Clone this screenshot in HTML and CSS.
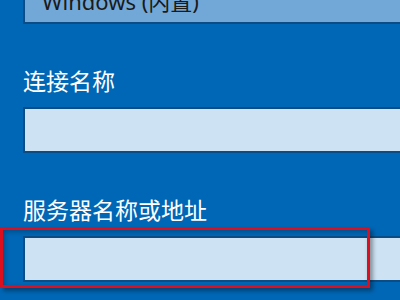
FILE: index.html
```html
<!DOCTYPE html>
<html lang="zh-CN">
<head>
  <meta charset="UTF-8">
  <title>添加 VPN 连接</title>
  <link rel="stylesheet" href="styles.css">
</head>
<body>

<div class="form">
  <div class="field select">Windows (内置)</div>

  <label class="label">连接名称</label>
  <div class="field"></div>

  <label class="label">服务器名称或地址</label>
  <div class="focus-wrap">
    <div class="field"></div>
    <div class="highlight"></div>
  </div>
</div>

</body>
</html>
```

FILE: styles.css
```css
* {
  margin: 0;
  padding: 0;
  box-sizing: border-box;
}

body {
  background-color: #0067b6;
  font-family: 'Noto Sans', 'Noto Sans CJK SC', sans-serif;
  overflow: hidden;
  width: 400px;
  height: 300px;
}

.form {
  padding-left: 23px;
  margin-top: -22px;
}

.field {
  width: 400px;
  height: 46px;
  border: 2px solid #0c4c84;
  border-right: none;
  background-color: #cde2f2;
}

.select {
  background-color: #72a8d8;
  color: #1a1a1a;
  font-size: 22px;
  line-height: 42px;
  padding-left: 17px;
}

.label {
  display: block;
  color: #fff;
  font-family: 'Noto Sans CJK SC', sans-serif;
  font-size: 23px;
  line-height: 30px;
  margin-top: 41px;
  margin-bottom: 12px;
}

.focus-wrap {
  position: relative;
}

.highlight {
  position: absolute;
  top: -9px;
  left: -23px;
  width: 370px;
  height: 61px;
  border: 3px solid #dc0f1e;
  box-shadow: 3px 3px 4px rgba(0, 0, 0, 0.35), inset 2px 2px 5px rgba(0, 0, 0, 0.25);
}
```
